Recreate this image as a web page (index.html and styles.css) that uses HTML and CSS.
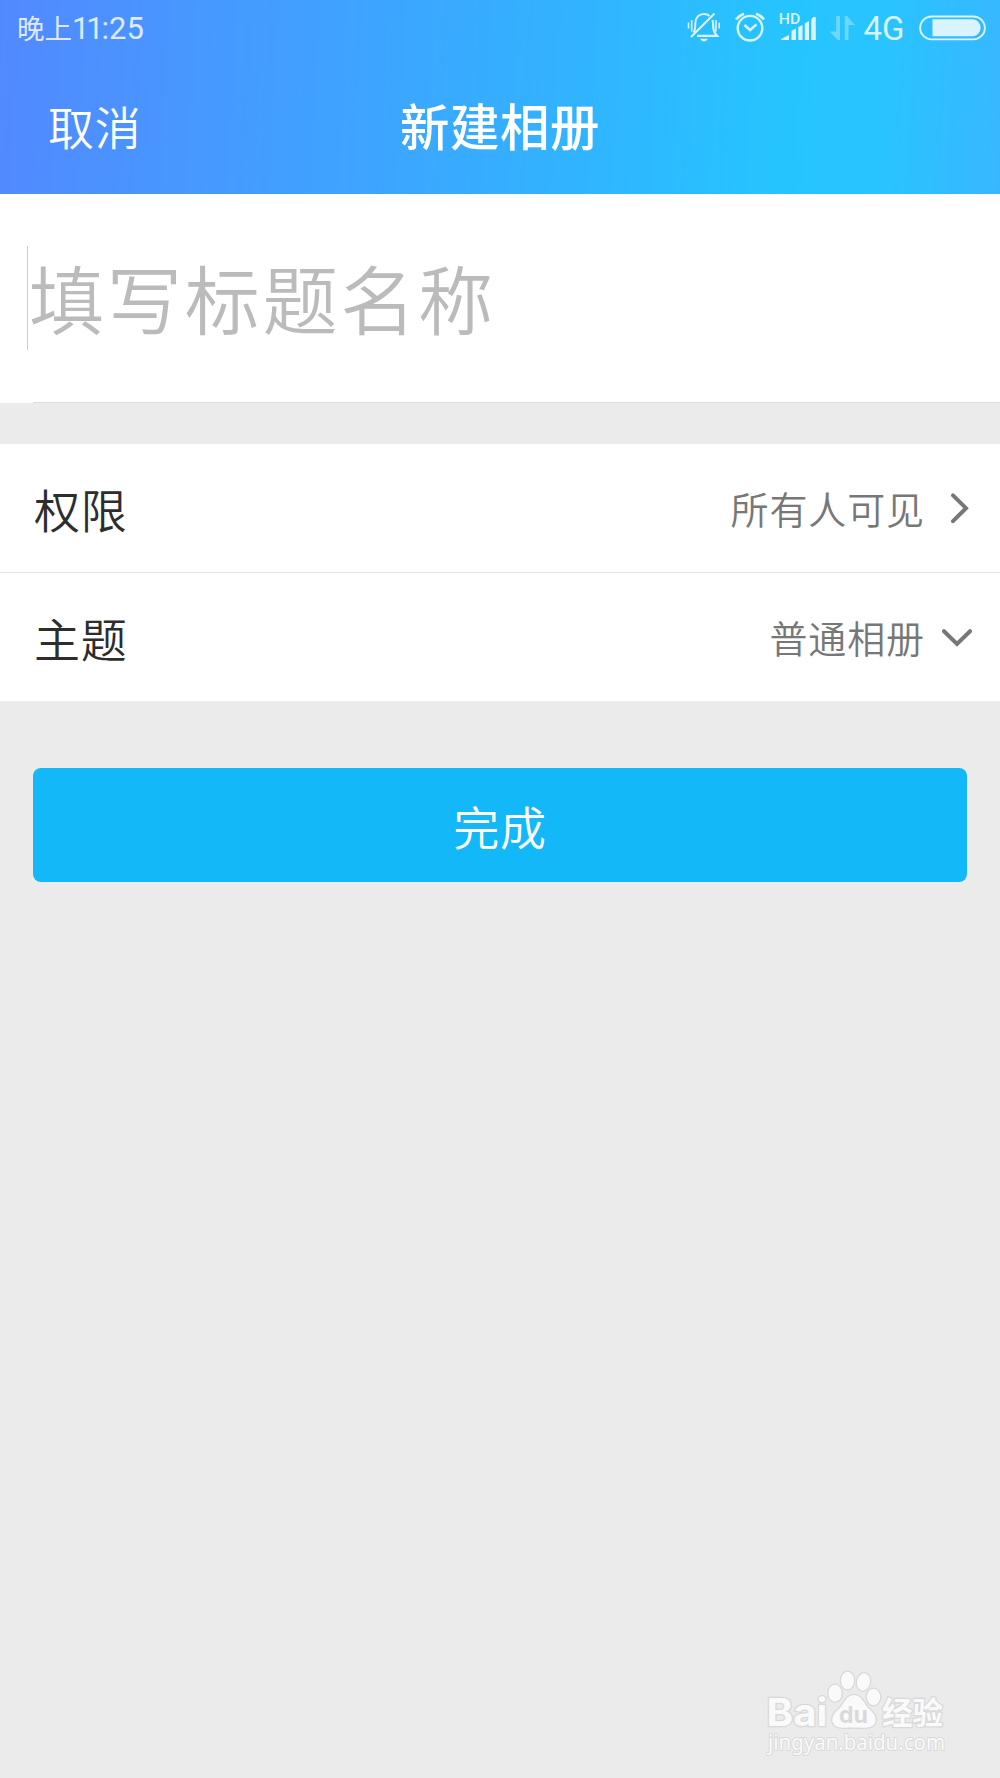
FILE: index.html
```html
<!DOCTYPE html>
<html lang="zh-CN">
<head>
<meta charset="utf-8">
<title>新建相册</title>
<link rel="stylesheet" href="styles.css">
</head>
<body>
<div class="screen">
  <header class="header">
    <div class="status">
      <div class="clock"><span class="clock-period">晚上</span><span class="clock-ones">11</span><span class="clock-colon">:</span><span class="clock-min">25</span></div>
      <div class="status-icons">
        <svg class="icon" width="34" height="40" viewBox="687 8 34 40" fill="none" stroke="currentColor" stroke-width="2">
          <path d="M691 37 714.5 13.500" stroke-width="2.200"/>
          <path d="M693.500 32.500C695.500 30 695.200 27 695.300 23.500C695.500 17.500 699 14 704 14Q707.500 14 709.500 16"/>
          <path d="M712.500 20Q713.200 22 713.200 26C713.200 30 714 32.500 717 35.800H697" stroke-width="2.200"/>
          <path d="M688.500 22.500V28.500M691.700 20V31.500M716 20V31.500M719.200 22.500V28.500" stroke-width="1.600"/>
          <path d="M700 38.800H708Q706.500 41.500 704 41.500T700 38.800Z" fill="currentColor" stroke="none"/>
        </svg>
        <svg class="icon icon-alarm" width="32" height="40" viewBox="734 8 32 40" fill="none" stroke="currentColor" stroke-width="2.400">
          <circle cx="750" cy="28.200" r="12.300"/>
          <path d="M744.500 25 750 30 756.500 24.500" stroke-width="2.500"/>
          <path d="M736 19.500Q739 15.500 744 13.700M764 19.500Q761 15.500 756 13.700" stroke-width="2.800"/>
        </svg>
        <svg class="icon icon-signal" width="38" height="40" viewBox="779 8 38 40" fill="currentColor">
          <text class="hd" x="778.800" y="24" textLength="21.500" lengthAdjust="spacingAndGlyphs">HD</text>
          <path d="M781 40V39L789 35V40ZM791.500 40V30.700L796 28.500V40ZM798.300 40V27L802.500 25V40ZM804.800 40V23.500L809 21V40ZM811.300 40V19L813.500 17H815.800V40Z"/>
        </svg>
        <svg class="icon icon-data" width="27" height="40" viewBox="829 8 27 40" fill="currentColor">
          <path d="M836.200 16H840V40H838L829.500 31.500H836.200ZM844.800 16H847L855 25H848.500V40H844.800Z"/>
        </svg>
        <span class="network">4G</span>
        <svg class="icon" width="67" height="40" viewBox="919.500 8 67 40" fill="none" stroke="currentColor">
          <rect x="920.600" y="16.500" width="64.800" height="22.800" rx="11.400" stroke-width="1.800"/>
          <path d="M933 19.300H973.500A8.500 8.500 0 0 1 973.500 36.200H933Z" fill="currentColor" stroke="none"/>
        </svg>
      </div>
    </div>
    <nav class="navbar">
      <span class="cancel">取消</span>
      <h1 class="title">新建相册</h1>
      <span></span>
    </nav>
  </header>
  <main>
    <section class="name-field"><span class="placeholder">填写标题名称</span></section>
    <section class="options">
      <div class="row">
        <span class="label">权限</span>
        <span class="value">所有人可见</span>
        <svg class="chevron" width="34" height="34" viewBox="0 0 34 34"><path d="M11 4.300 24 17.200 11 30.200"/></svg>
      </div>
      <div class="row">
        <span class="label">主题</span>
        <span class="value">普通相册</span>
        <svg class="chevron" width="34" height="34" viewBox="0 0 34 34"><path d="M2 11.200 15 24 28 11.200"/></svg>
      </div>
    </section>
    <button class="done">完成</button>
  </main>
  <footer class="watermark">
    <svg width="230" height="128" viewBox="0 0 230 128">
      <g class="mark">
        <text class="mark-bold" x="26.500" y="76" font-size="38" textLength="61" lengthAdjust="spacingAndGlyphs">Bai</text>
        <ellipse cx="95" cy="43.200" rx="6.600" ry="8.500"/>
        <ellipse cx="107.500" cy="30.500" rx="6.500" ry="8.700"/>
        <ellipse cx="123.500" cy="32" rx="6.500" ry="8.700" transform="rotate(10 123.500 32)"/>
        <ellipse cx="133.500" cy="47" rx="6.700" ry="8.200"/>
        <path d="M114 45C122 45 124 54 129 59C134 63 137 68 135 73C132 79 125 77.500 114 77.500S96 79 93 73C91 68 94 63 99 59C104 54 106 45 114 45Z"/>
        <text class="mark-cjk" x="142" y="74" font-size="31" textLength="61" lengthAdjust="spacingAndGlyphs">经验</text>
        <text class="mark-url" x="28" y="100" font-size="21" textLength="177" lengthAdjust="spacingAndGlyphs">jingyan.baidu.com</text>
      </g>
      <text class="mark-du" x="99" y="72.500" font-size="23" textLength="29" lengthAdjust="spacingAndGlyphs">du</text>
    </svg>
  </footer>
</div>
</body>
</html>
```
FILE: styles.css
```css
* { box-sizing: border-box; }

body {
  margin: 0;
  font-family: "Noto Sans CJK SC", sans-serif;
  font-weight: 350;
  background: #ebebeb;
}

.screen {
  width: 1000px;
  height: 1778px;
  display: flex;
  flex-direction: column;
  background: #ebebeb;
}

.header {
  height: 194px;
  color: #fff;
  background: linear-gradient(93deg, #5289ff 0%, #41a0ff 31%, #33b1ff 55%, #26c4ff 78%, #28c4ff 87%, #38b7ff 100%);
}

.status {
  height: 56px;
  padding: 0 14.5px 0 17px;
  display: flex;
  justify-content: space-between;
  align-items: center;
  color: rgba(255, 255, 255, 0.82);
}

.clock {
  padding-top: 3px;
  font-family: Roboto, "Noto Sans CJK SC", sans-serif;
  font-weight: 400;
  font-size: 31px;
  line-height: 40px;
  white-space: nowrap;
}

.clock-period { font-size: 27.5px; }
.clock-ones { letter-spacing: -3.2px; }
.clock-colon { margin-left: 1px; }

.status-icons { display: flex; align-items: center; }
.icon { display: block; flex: none; }
.icon-alarm { margin-left: 13px; }
.icon-signal { margin-left: 13px; }
.icon-data { margin-left: 12px; opacity: 0.4; }
.hd { font: 500 14px Roboto, sans-serif; }

.network {
  width: 42px;
  margin: 2px 13px 0 8px;
  font: 33px/40px Roboto, sans-serif;
}

.navbar {
  height: 138px;
  padding: 0 48px;
  display: grid;
  grid-template-columns: 1fr auto 1fr;
  align-items: center;
}

.cancel { font-size: 46px; letter-spacing: 0.8px; line-height: 137px; }
.title { margin: 0; font-size: 49.5px; letter-spacing: 0.5px; font-weight: 500; line-height: 138px; }

.name-field {
  height: 209px;
  padding: 52px 0 0 27px;
  background: linear-gradient(#dcdcdc, #dcdcdc) 33px 100% / 967px 1px no-repeat #fff;
}

.placeholder {
  display: block;
  height: 104px;
  padding-left: 1px;
  border-left: 1px solid #ccc;
  font-size: 75.3px;
  letter-spacing: 2.5px;
  line-height: 102px;
  color: #bbb;
}

.options { margin-top: 41px; background: #fff; }

.row {
  height: 128px;
  padding: 0 24px 0 34px;
  display: flex;
  align-items: center;
}

.row + .row { height: 129px; border-top: 1px solid #e2e2e2; }

.label,
.value { padding-bottom: 1px; }

.label { flex: 1; font-size: 46px; letter-spacing: 0.8px; color: #2d2d2d; }
.value { font-size: 38px; letter-spacing: 0.9px; color: #777; }
.chevron { margin-left: 17px; fill: none; stroke: #777; stroke-width: 4; stroke-linecap: round; }

.done {
  display: block;
  width: 934px;
  height: 114px;
  margin: 67px auto 0;
  padding: 0;
  border: 0;
  border-radius: 8px;
  background: #13b8f8;
  color: #fff;
  font: 350 46px/113px "Noto Sans CJK SC", sans-serif;
  letter-spacing: 0.8px;
}

.watermark { margin: auto 30px 0 auto; }
.watermark svg { display: block; }
.mark { fill: #fafafa; stroke: #d9d9d9; stroke-width: 2.6; paint-order: stroke; stroke-linejoin: round; }
.mark-bold { font-family: Inter, sans-serif; font-weight: 700; }
.mark-cjk { font-family: "Noto Sans CJK SC", sans-serif; font-weight: 700; }
.mark-url { font-family: "Noto Sans", sans-serif; font-weight: 400; stroke-width: 2; }
.mark-du { font-family: Inter, sans-serif; font-weight: 700; fill: #d9d9d9; }
```
